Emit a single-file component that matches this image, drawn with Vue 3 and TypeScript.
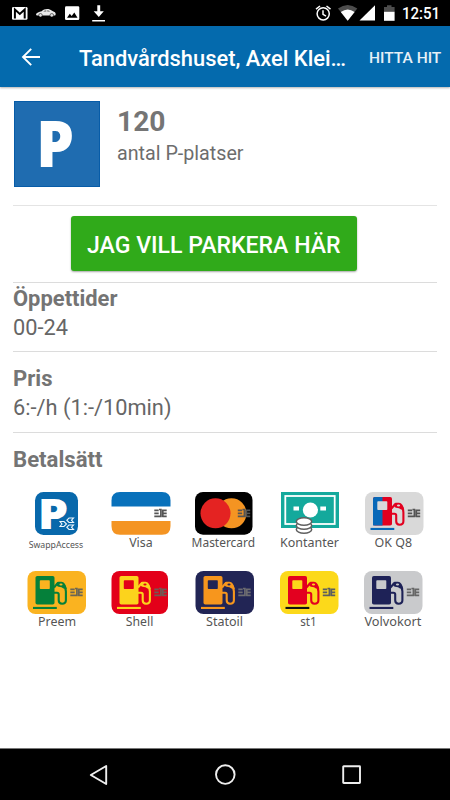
<script setup lang="ts">
interface Pay {
  name: string
  kind: 'swapp' | 'visa' | 'master' | 'cash' | 'fuel'
  x: number
  w: number
  tx: number
  tw: number
  bg?: string
  fg?: string
  left?: string
  base?: string
  chip?: string
}

const row1: Pay[] = [
  { name: 'SwappAccess', kind: 'swapp', x: 21, w: 43, tx: 14.7, tw: 54.5 },
  { name: 'Visa', kind: 'visa', x: 13.5, w: 59, tx: 31.2, tw: 23.5 },
  { name: 'Mastercard', kind: 'master', x: 13, w: 57.5, tx: 9.6, tw: 63.5 },
  { name: 'Kontanter', kind: 'cash', x: 15, w: 58, tx: 14, tw: 59 },
  { name: 'OK Q8', kind: 'fuel', x: 15, w: 58.5, tx: 24.5, tw: 37.5, bg: '#d9d9d9', fg: '#e2001f', left: '#0868b8', base: '#0868b8', chip: '#555' },
]

const row2: Pay[] = [
  { name: 'Preem', kind: 'fuel', x: 13.5, w: 58.5, tx: 24, tw: 38, bg: '#fab320', fg: '#05803a', chip: '#6b6655' },
  { name: 'Shell', kind: 'fuel', x: 13.5, w: 56.5, tx: 27.8, tw: 27.5, bg: '#e30019', fg: '#fcd31c', chip: '#6f5a55' },
  { name: 'Statoil', kind: 'fuel', x: 13.5, w: 58.5, tx: 24, tw: 37, bg: '#222555', fg: '#f7961d', chip: '#6c6b70' },
  { name: 'st1', kind: 'fuel', x: 14, w: 58.5, tx: 34.2, tw: 16.5, bg: '#fcd91a', fg: '#e3001f', base: '#111', chip: '#5b5f60' },
  { name: 'Volvokort', kind: 'fuel', x: 14, w: 58.5, tx: 14.4, tw: 57, bg: '#c9cacc', fg: '#1e2257', chip: '#666' },
]

const rows: Pay[][] = [row1, row2]
</script>

<template>
  <div class="screen">
    <header class="status">
      <svg class="status-left" width="110" height="26" viewBox="0 0 110 26">
        <rect x="12" y="7" width="15.5" height="12.8" rx="1.3" fill="#fff" />
        <path d="M14.9 18.6V9.6L19.8 14L24.7 9.6V18.6" fill="none" stroke="#000" stroke-width="2" />
        <path d="M36 14.2C36.4 12.4 39 12 41.7 11.2C44 8.8 49 8.2 52 10.8L55 12.3Q56.5 14 55.2 15.6H37.2Q36 15.4 36 14.2Z" fill="#e8e8e8" />
        <path d="M43.2 11.5L45 10.4H46.3V11.6ZM47.3 10.3Q49.2 10.4 50.2 11.6H47.3Z" fill="#555" />
        <circle cx="40.5" cy="15.3" r="1.8" fill="#ddd" stroke="#000" stroke-width=".5" />
        <circle cx="51.8" cy="15.3" r="1.8" fill="#ddd" stroke="#000" stroke-width=".5" />
        <rect x="65" y="6.3" width="14.3" height="13.7" rx="1.3" fill="#fff" />
        <path d="M67 17.7L69.8 13.8L71.7 16L74.3 12.5L77.5 17.7Z" fill="#000" />
        <path d="M97.3 5.2H100.2V11.3H103.8L98.8 17L93.7 11.3H97.3ZM92.2 20H105V21.6H92.2Z" fill="#fff" />
      </svg>
      <svg class="status-right" width="90" height="26" viewBox="310 0 90 26">
        <circle cx="323.2" cy="13.8" r="6.1" fill="none" stroke="#fff" stroke-width="1.5" />
        <path d="M323 10.2V14.3L326 16.2M316 9.2L320 6M330.5 9.2L326.5 6" fill="none" stroke="#fff" stroke-width="1.5" />
        <path d="M338 8.6Q347.7 1.6 357.3 8.6L347.7 20.8Z" fill="#4d4d4d" />
        <path d="M340.8 12.1Q347.7 7 354.6 12.1L347.7 20.8Z" fill="#fff" />
        <path d="M375 5.2V20.6H359.5Z" fill="#fff" />
        <path d="M384 7H387V5.2H391.5V7H394.6V12H384Z" fill="#4d4d4d" />
        <path d="M384 11.8H394.6V20.8H384Z" fill="#fff" />
      </svg>
      <svg class="clock" width="50" height="26"><text x="2" y="19.2" textLength="38" lengthAdjust="spacingAndGlyphs">12:51</text></svg>
    </header>

    <nav class="appbar">
      <svg class="back" width="20" height="20" viewBox="0 0 20 20">
        <path d="M19 10H2.3M10.2 1.8L2 10L10.2 18.2" fill="none" stroke="#fff" stroke-width="1.9" />
      </svg>
      <svg class="title" width="270" height="61"><text x="0" y="39.5" textLength="267" lengthAdjust="spacingAndGlyphs">Tandvårdshuset, Axel Klei…</text></svg>
      <svg class="action" width="76" height="61"><text x="0" y="37" textLength="72.3" lengthAdjust="spacingAndGlyphs">HITTA HIT</text></svg>
    </nav>

    <main class="content">
      <section class="summary">
        <svg class="parking" width="86" height="86"><rect width="86" height="86" fill="#1f6cb0" /><rect x=".5" y=".5" width="85" height="85" fill="none" stroke="#075ca8" /><text x="22.3" y="65.6" textLength="37.8" lengthAdjust="spacingAndGlyphs">P</text></svg>
        <svg class="facts" width="200" height="80">
          <text class="count" x="0" y="30.3" textLength="48.5" lengthAdjust="spacingAndGlyphs">120</text>
          <text class="caption" x="0" y="58.8" textLength="126.5" lengthAdjust="spacingAndGlyphs">antal P-platser</text>
        </svg>
      </section>

      <section class="cta">
        <button type="button" class="park">
          <svg width="254" height="30"><text x="0" y="23.6" textLength="253.5" lengthAdjust="spacingAndGlyphs">JAG VILL PARKERA HÄR</text></svg>
        </button>
      </section>

      <section class="info hours">
        <svg width="300" height="66">
          <text class="head" x="0" y="22.9" textLength="104.5" lengthAdjust="spacingAndGlyphs">Öppettider</text>
          <text class="value" x="0" y="52" textLength="55" lengthAdjust="spacingAndGlyphs">00-24</text>
        </svg>
      </section>

      <section class="info price">
        <svg width="300" height="76">
          <text class="head" x="0" y="34.2" textLength="39.5" lengthAdjust="spacingAndGlyphs">Pris</text>
          <text class="value" x="0" y="63.3" textLength="158.5" lengthAdjust="spacingAndGlyphs">6:-/h (1:-/10min)</text>
        </svg>
      </section>

      <section class="info payment">
        <svg width="300" height="50">
          <text class="head" x="0" y="34.2" textLength="89.5" lengthAdjust="spacingAndGlyphs">Betalsätt</text>
        </svg>
      </section>

      <div v-for="(row, r) in rows" :key="r" class="pay-row">
        <svg v-for="p in row" :key="p.name" class="pay" width="84" height="66">
          <g :transform="`translate(${p.x} 0)`">
            <template v-if="p.kind === 'swapp'">
              <rect width="43" height="43" rx="8.5" fill="#0868ab" />
              <text class="swapp-p" x="2.8" y="37" textLength="30.5" lengthAdjust="spacingAndGlyphs">P</text>
              <rect x="23.8" y="27" width="15" height="11" rx="2" fill="#0868ab" />
              <g fill="none" stroke="#eef6fc" stroke-width="1.1">
                <path d="M25 29.5H29L31.5 32L29 34.5H25L27 32Z" />
                <path d="M38.5 26H34L31.8 28.2L34 30.5H38.5L36.5 28.2Z" />
                <path d="M38.5 33H34L31.8 35.2L34 37.5H38.5L36.5 35.2Z" />
              </g>
            </template>

            <template v-else-if="p.kind === 'visa'">
              <path d="M0 14.5V8.5Q0 0 8.5 0H50.5Q59 0 59 8.5V14.5Z" fill="#0871bb" />
              <path d="M0 29H59V34Q59 42.7 50.5 42.7H8.5Q0 42.7 0 34Z" fill="#f49422" />
            </template>

            <template v-else-if="p.kind === 'master'">
              <rect width="57.5" height="42.7" rx="8" fill="#000" />
              <circle cx="36.5" cy="21.3" r="15" fill="#f49422" />
              <circle cx="20.5" cy="21.3" r="15" fill="#e42322" />
            </template>

            <template v-else-if="p.kind === 'cash'">
              <rect width="58" height="36" fill="#14a99c" />
              <rect x="4.3" y="4" width="49.4" height="28" fill="none" stroke="#fff" stroke-width="1.8" />
              <circle cx="29.4" cy="18" r="7.6" fill="#fff" />
              <path d="M12.5 14.5H18V18.5H12.5ZM39.3 14.5H45V18.5H39.3Z" fill="#fff" />
              <g fill="#fff" stroke="#606060" stroke-width="1.5">
                <ellipse cx="23" cy="37.5" rx="7.7" ry="3.8" />
                <ellipse cx="23" cy="33.5" rx="7.7" ry="3.8" />
                <ellipse cx="23" cy="29.5" rx="7.7" ry="3.8" />
              </g>
            </template>

            <template v-else>
              <rect :width="p.w" height="43" rx="8" :fill="p.bg" />
              <rect x="8" y="5" width="19" height="28.5" rx="1.8" :fill="p.fg" />
              <path v-if="p.left" d="M17.5 5H9.8Q8 5 8 6.8V33.5H17.5Z" :fill="p.left" />
              <rect x="12.3" y="9.2" width="10" height="8.8" rx=".8" :fill="p.bg" />
              <rect x="5.5" y="35.9" width="23.8" height="2.1" :fill="p.base || p.fg" />
              <path d="M26.5 21.8H29.5Q31.2 21.8 31.2 23.6V29.3Q31.2 32.7 34.6 32.7Q38.4 32.7 38.4 29.3V20.5Q38.4 17 36.4 14.2" fill="none" :stroke="p.fg" stroke-width="2.1" />
              <path d="M26.5 16.5L29.8 12.5" fill="none" :stroke="p.fg" stroke-width="2" />
              <path d="M29 12.2Q29.3 10.8 31 10.8H34Q38 11.2 39.2 18L36 17.4Q34.5 16 31 15.8Q28.9 15.3 29 12.2Z" :fill="p.fg" />
              <ellipse cx="33.5" cy="13.5" rx="1.6" ry="1" :fill="p.bg" />
            </template>

            <g v-if="p.kind !== 'swapp' && p.kind !== 'cash'" :stroke="p.chip || '#555'" stroke-width="1.7" fill="none">
              <path d="M42.8 18.3H47.2M42.8 21.3H47.2M42.8 24.3H49.4V17.5H47.5M50.7 18.3H55.2M50.7 21.3H55.2M50.7 24.3H55.2M51.3 17.5V25" />
            </g>
          </g>
          <text class="label" :class="{ small: p.kind === 'swapp' }" :x="p.tx" :y="p.kind === 'swapp' ? 55.5 : 55" :textLength="p.tw" lengthAdjust="spacingAndGlyphs">{{ p.name }}</text>
        </svg>
      </div>
    </main>

    <footer class="navbar">
      <svg width="20" height="22" viewBox="0 0 20 22"><path d="M17.2 2V20L1.8 11Z" fill="none" stroke="#eee" stroke-width="1.9" stroke-linejoin="round" /></svg>
      <svg width="22" height="22" viewBox="0 0 22 22"><circle cx="10.3" cy="10.6" r="9.3" fill="none" stroke="#eee" stroke-width="1.9" /></svg>
      <svg width="20" height="22" viewBox="0 0 20 22"><rect x="1.2" y="2.2" width="16.8" height="16.8" rx=".5" fill="none" stroke="#eee" stroke-width="1.9" /></svg>
    </footer>
  </div>
</template>

<style>
body {
  margin: 0;
  background: #fff;
}
</style>

<style scoped>
.screen {
  width: 450px;
  height: 800px;
  display: flex;
  flex-direction: column;
  overflow: hidden;
  background: #fff;
  font-family: Roboto, sans-serif;
}
svg {
  display: block;
  flex: none;
  overflow: visible;
}
.status {
  height: 26px;
  flex: none;
  display: flex;
  background: #000;
}
.status-right {
  margin-left: 200px;
}
.clock text {
  font-size: 16px;
  font-weight: 500;
  fill: #fff;
}
.appbar {
  height: 61px;
  flex: none;
  display: flex;
  align-items: center;
  background: #046aad;
  box-shadow: 0 1px 2px rgba(0, 0, 0, 0.3);
}
.back {
  margin: 0 37px 0 21px;
}
.title {
  margin-left: 1px;
}
.title text {
  font-size: 22px;
  font-weight: 500;
  fill: #fff;
}
.action {
  margin-left: 20px;
}
.action text {
  font-size: 15.5px;
  font-weight: 500;
  fill: #e6f0f7;
}
.content {
  flex: 1;
  min-height: 0;
  padding: 0 13px;
}
.summary {
  height: 104px;
  padding: 14px 0 0 1px;
  display: flex;
  gap: 17px;
  border-bottom: 1px solid #e4e4e4;
}
.parking text {
  font-family: "Open Sans", sans-serif;
  font-size: 63px;
  font-weight: 800;
  fill: #fff;
}
.count {
  font-size: 28.5px;
  font-weight: 700;
  fill: #757575;
}
.caption {
  font-size: 19.5px;
  fill: #6d6d6d;
}
.cta {
  height: 76px;
  display: flex;
  padding-left: 58px;
  border-bottom: 1px solid #dcdcdc;
}
.park {
  width: 286px;
  height: 55px;
  margin: 10px 0 0;
  padding: 0;
  display: flex;
  align-items: center;
  justify-content: center;
  border: 0;
  border-radius: 3px;
  background: #30aa1a;
  font-family: inherit;
  box-shadow: 0 1px 2px rgba(0, 0, 0, 0.35);
}
.park text {
  font-size: 23px;
  font-weight: 500;
  fill: #fff;
}
.info {
  border-bottom: 1px solid #dcdcdc;
}
.hours {
  height: 68px;
}
.price {
  height: 80px;
}
.payment {
  height: 59px;
  border: 0;
}
.head {
  font-size: 21.5px;
  font-weight: 700;
  fill: #747474;
}
.value {
  font-size: 21.5px;
  fill: #666;
}
.summary + .cta {
  flex: none;
}
.pay-row {
  display: grid;
  grid-template-columns: repeat(5, 84px);
  height: 79px;
  padding-left: 1px;
}
.label {
  font-family: "Noto Sans", "Open Sans", sans-serif;
  font-size: 13px;
  fill: #555;
}
.label.small {
  font-size: 9.3px;
}
.swapp-p {
  font-family: "Open Sans", sans-serif;
  font-size: 43px;
  font-weight: 800;
  fill: #fff;
}
.navbar {
  height: 52px;
  flex: none;
  display: flex;
  align-items: center;
  justify-content: space-between;
  box-sizing: border-box;
  padding: 0 88px 0 89px;
  border-top: 1px solid #777;
  background: #000;
}
</style>
